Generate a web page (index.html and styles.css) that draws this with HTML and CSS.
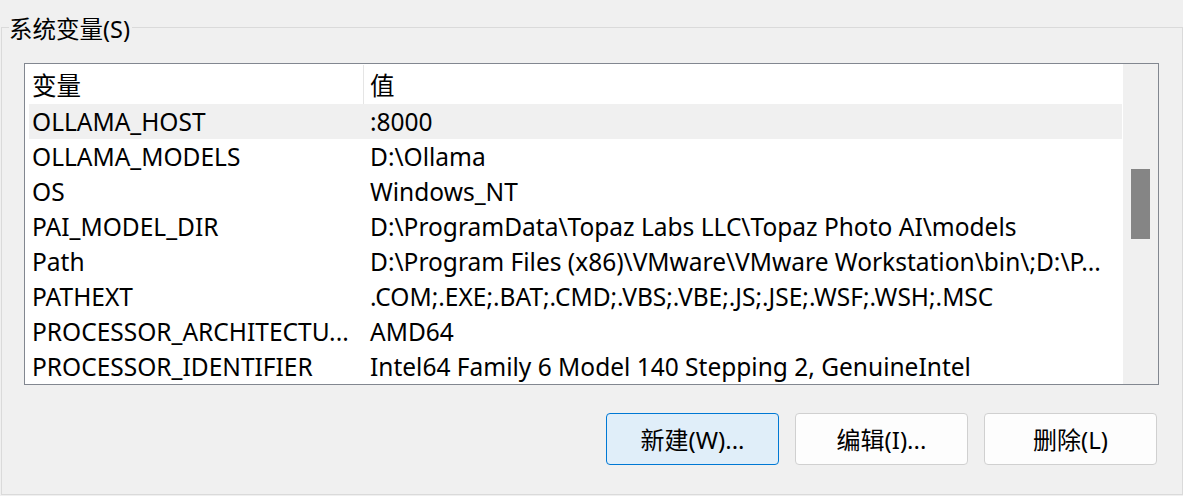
FILE: index.html
```html
<!DOCTYPE html>
<html lang="zh-CN">
<head>
<meta charset="utf-8">
<title>系统变量</title>
<link rel="stylesheet" href="styles.css">
</head>
<body>
<fieldset class="group">
  <legend class="group-title">系统变量(S)</legend>
  <div class="listbox">
    <div class="list-main">
      <div class="list-header">
        <div class="col col-name">变量</div>
        <div class="col col-value col-sep">值</div>
      </div>
      <div class="row row-hover"><div class="col col-name">OLLAMA_HOST</div><div class="col col-value">:8000</div></div>
      <div class="row"><div class="col col-name">OLLAMA_MODELS</div><div class="col col-value">D:\Ollama</div></div>
      <div class="row"><div class="col col-name">OS</div><div class="col col-value">Windows_NT</div></div>
      <div class="row"><div class="col col-name">PAI_MODEL_DIR</div><div class="col col-value">D:\ProgramData\Topaz Labs LLC\Topaz Photo AI\models</div></div>
      <div class="row"><div class="col col-name">Path</div><div class="col col-value">D:\Program Files (x86)\VMware\VMware Workstation\bin\;D:\P...</div></div>
      <div class="row"><div class="col col-name">PATHEXT</div><div class="col col-value">.COM;.EXE;.BAT;.CMD;.VBS;.VBE;.JS;.JSE;.WSF;.WSH;.MSC</div></div>
      <div class="row"><div class="col col-name">PROCESSOR_ARCHITECTU...</div><div class="col col-value">AMD64</div></div>
      <div class="row"><div class="col col-name">PROCESSOR_IDENTIFIER</div><div class="col col-value">Intel64 Family 6 Model 140 Stepping 2, GenuineIntel</div></div>
    </div>
    <div class="scrollbar"><div class="thumb"></div></div>
  </div>
  <div class="buttons">
    <button class="btn btn-default">新建(W)...</button>
    <button class="btn">编辑(I)...</button>
    <button class="btn">删除(L)</button>
  </div>
</fieldset>
</body>
</html>
```
FILE: styles.css
```css
html, body {
  margin: 0;
  padding: 0;
  background: #f0f0f0;
}
body {
  font-family: "Noto Sans", "Noto Sans CJK SC", sans-serif;
  font-size: 24.5px;
  color: #000;
  width: 1183px;
  height: 496px;
  overflow: hidden;
}
.group {
  margin: 11px 0 0 1px;
  width: 1182px;
  box-sizing: border-box;
  height: 484px;
  border: 1px solid #dadada;
  padding: 20px 23px 0 22px;
}
.group-title {
  padding: 4px 2px 0 0;
  margin-left: -15px;
  line-height: 28px;
  font-size: 23.5px;
}
.listbox {
  display: flex;
  height: 322px;
  box-sizing: border-box;
  border: 1px solid #828790;
  background: #fff;
  overflow: hidden;
}
.list-main {
  flex: 1;
  padding-left: 4px;
  border-right: 1px solid #fff;
}
.list-header, .row {
  display: flex;
  align-items: center;
}
.list-header {
  height: 40px;
}
.row {
  height: 35px;
}
.row-hover {
  background: #f0f0f0;
}
.col {
  white-space: nowrap;
  overflow: hidden;
}
.col-name {
  width: 334px;
  padding-left: 3px;
  box-sizing: border-box;
}
.col-value {
  flex: 1;
  padding-left: 7px;
}
.col-sep {
  align-self: stretch;
  display: flex;
  align-items: center;
  border-left: 1px solid #e5e5e5;
  margin-top: 1px;
  padding-left: 6px;
}
.scrollbar {
  width: 35px;
  background: #f0f0f0;
  display: flex;
  justify-content: center;
}
.thumb {
  width: 19px;
  height: 70px;
  margin-top: 105px;
  background: #858585;
}
.buttons {
  display: flex;
  justify-content: flex-end;
  gap: 16px;
  margin-top: 28px;
  padding-right: 2px;
}
.btn {
  width: 173px;
  height: 52px;
  font-family: "Noto Sans", "Noto Sans CJK SC", sans-serif;
  font-size: 24px;
  color: #000;
  background: #fdfdfd;
  border: 1px solid #d0d0d0;
  border-radius: 4px;
  padding: 0 0 2px;
}
.btn-default {
  background: #e0eef9;
  border-color: #0078d4;
}
```
